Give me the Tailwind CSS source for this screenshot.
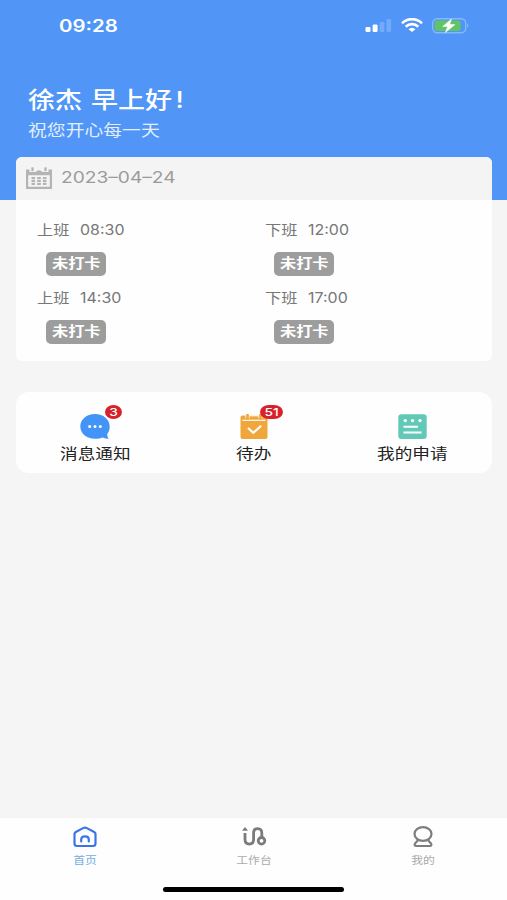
<!DOCTYPE html>
<html lang="zh-CN">
<head>
<meta charset="utf-8">
<title>首页</title>
<script src="https://cdn.jsdelivr.net/npm/@tailwindcss/browser@4"></script>
</head>
<body class="w-[507px] h-[900px] overflow-hidden bg-[#f5f5f5] font-['Inter','Noto_Sans_CJK_SC',sans-serif]">
<div class="flex flex-col h-[900px] whitespace-nowrap">
  <header class="h-[200px] shrink-0 bg-[#5196f7] text-white">
    <div class="flex h-[50px] justify-between pl-[59px] pr-[37px]">
      <div class="mt-[14px] h-6 leading-6 text-[17px] font-semibold origin-left scale-x-[1.2]">09:28</div>
      <div class="flex items-start gap-[9px] pt-[18px]">
        <svg class="mt-px" width="27" height="14" viewBox="0 0 27 14"><rect x=".5" y="8" width="5" height="5" rx="1.3" fill="#fff"/><rect x="7.6" y="5.5" width="5" height="7.500" rx="1.3" fill="#fff"/><rect x="14.700" y="3" width="4.600" height="10" rx="1.3" fill="#73abfa"/><rect x="21.500" y="0" width="4.600" height="13" rx="1.3" fill="#73abfa"/></svg>
        <svg width="22" height="14" viewBox="0 0 22 14" fill="none" stroke="#fff" stroke-width="2.6"><path d="M1 5.3C6.5-.2 15.500-.2 21 5.300"/><path d="M4.700 8.700C8.300 5.300 13.700 5.300 17.300 8.700"/><path d="M7.500 11.200Q11 8.200 14.500 11.200L11 14Z" fill="#fff" stroke="none"/></svg>
        <svg width="38" height="16" viewBox="0 0 38 16"><rect x=".7" y=".7" width="33" height="14" rx="4.500" fill="none" stroke="#85b7fb" stroke-width="1.400"/><path d="M35.200 5.200q2.600 2.300 0 4.600z" fill="#85b7fb"/><rect x="2.700" y="2.500" width="26" height="10.500" rx="2.500" fill="#62c466"/><path d="M19.500 1 10.700 8.500h5L13.300 14.500 23 6.600h-5.300z" fill="#fff" stroke="#fff" stroke-width=".5"/></svg>
      </div>
    </div>
    <div class="pl-7 pt-[34px]">
      <h1 class="flex w-fit h-8 leading-8 text-[22.5px] font-medium origin-left scale-x-[1.2]">徐杰&nbsp;<span class="ml-[1.500px]">早上好</span><span class="ml-[3px]">!</span></h1>
      <p class="w-fit mt-[2.500px] h-6 leading-6 text-[15.700px] text-[#e2eefe] origin-left scale-x-[1.2]">祝您开心每一天</p>
    </div>
  </header>

  <main class="flex-1 pl-4 pr-[15px]">
    <section class="relative -mt-[43px] h-[203.500px] overflow-hidden rounded-[6px] bg-[#fefefe]">
      <div class="flex h-[43px] items-start bg-[#f4f4f4] pl-[10px] pt-[10px]">
        <svg width="26" height="22" viewBox="0 0 26 22"><path fill-rule="evenodd" fill="#b4b4b4" d="M0 2.500h3.500v2.500h6Q13 1.500 16.500 5h6V2.500H26V22H0zM2.200 8.200v11.500h21.600V8.200z"/><path fill="#b4b4b4" stroke="#f4f4f4" stroke-width=".7" d="M5 0h3v4.500H5zM18 0h3v4.500h-3z"/><g fill="#b4b4b4"><rect x="5.500" y="10" width="3.600" height="2.200"/><rect x="11.200" y="10" width="3.600" height="2.200"/><rect x="16.900" y="10" width="3.600" height="2.200"/><rect x="5.500" y="13" width="3.600" height="2.200"/><rect x="11.200" y="13" width="3.600" height="2.200"/><rect x="16.900" y="13" width="3.600" height="2.200"/><rect x="5.500" y="16" width="3.600" height="2"/><rect x="11.200" y="16" width="3.600" height="2"/><rect x="16.900" y="16" width="3.600" height="2"/></g></svg>
        <span class="ml-[9px] h-[22px] leading-[22px] text-[15.500px] text-[#9b9b9b] origin-left scale-x-[1.235]">2023–04–24</span>
      </div>
      <div class="grid grid-cols-[228px_228px] pl-[20.500px] pt-[18.500px] text-[#777]">
        <div class="h-[68px]">
          <div class="flex h-[22px] leading-[22px] text-[13.500px]"><span class="w-[43px]"><span class="inline-block origin-left scale-x-[1.2]">上班</span></span><span class="origin-left scale-x-[1.14] text-[14px]">08:30</span></div>
          <div class="ml-[9.500px] mt-[11px] flex h-6 w-[60px] items-center justify-center rounded-[5px] bg-[#9d9d9d] text-[13.500px] font-bold text-white"><span class="scale-x-[1.2]">未打卡</span></div>
        </div>
        <div class="h-[68px]">
          <div class="flex h-[22px] leading-[22px] text-[13.500px]"><span class="w-[43px]"><span class="inline-block origin-left scale-x-[1.2]">下班</span></span><span class="origin-left scale-x-[1.14] text-[14px]">12:00</span></div>
          <div class="ml-[9.500px] mt-[11px] flex h-6 w-[60px] items-center justify-center rounded-[5px] bg-[#9d9d9d] text-[13.500px] font-bold text-white"><span class="scale-x-[1.2]">未打卡</span></div>
        </div>
        <div class="h-[68px]">
          <div class="flex h-[22px] leading-[22px] text-[13.500px]"><span class="w-[43px]"><span class="inline-block origin-left scale-x-[1.2]">上班</span></span><span class="origin-left scale-x-[1.14] text-[14px]">14:30</span></div>
          <div class="ml-[9.500px] mt-[11px] flex h-6 w-[60px] items-center justify-center rounded-[5px] bg-[#9d9d9d] text-[13.500px] font-bold text-white"><span class="scale-x-[1.2]">未打卡</span></div>
        </div>
        <div class="h-[68px]">
          <div class="flex h-[22px] leading-[22px] text-[13.500px]"><span class="w-[43px]"><span class="inline-block origin-left scale-x-[1.2]">下班</span></span><span class="origin-left scale-x-[1.14] text-[14px]">17:00</span></div>
          <div class="ml-[9.500px] mt-[11px] flex h-6 w-[60px] items-center justify-center rounded-[5px] bg-[#9d9d9d] text-[13.500px] font-bold text-white"><span class="scale-x-[1.2]">未打卡</span></div>
        </div>
      </div>
    </section>

    <section class="mt-[31.500px] grid h-[81px] grid-cols-3 rounded-[13px] bg-[#fefefe] text-[14.700px] text-[#222]">
      <div class="flex flex-col items-center pt-[21px]">
        <div class="relative">
          <svg width="30" height="28" viewBox="0 0 30 28"><path fill="#4294f7" d="M15 1C6.500 1 .3 6.500.3 13.500S6.500 25.800 15 25.800c3.200 0 5.700-.4 7.700-1.300 2 .9 4 1.300 6 1.200-1-1.300-1.500-3-1.500-4.700 1.600-2 2.500-4.500 2.500-7.500C29.700 6.500 23.500 1 15 1z"/><g fill="#fff"><circle cx="9.700" cy="13.500" r="1.500"/><circle cx="15" cy="13.500" r="1.500"/><circle cx="20.300" cy="13.500" r="1.500"/></g></svg>
          <span class="absolute left-[24.500px] -top-[8px] flex h-[14px] w-[17px] items-center justify-center rounded-[50%] bg-[#d8222b] text-[11px] leading-[14px] font-medium text-white"><span class="scale-x-[1.25]">3</span></span>
        </div>
        <span class="mt-[2px] leading-[22px] scale-x-[1.2]">消息通知</span>
      </div>
      <div class="flex flex-col items-center pt-[21px]">
        <div class="relative">
          <svg width="28" height="28" viewBox="0 0 28 28"><path d="M2.500 2.500H5.500V5.500H9.500V2.500H18.500V5.500H22.500V2.500H25.500Q27.500 2.500 27.500 4.500V24Q27.500 26 25.500 26H2.500Q.5 26 .5 24V4.500Q.5 2.500 2.500 2.500Z" fill="#f0a63a"/><path d="M2.500 7.300h23" stroke="#fff" stroke-width="1.200"/><path d="M9.500 2.600h9" stroke="#fef4e2" stroke-width="1.500"/><path d="M7.500 1v5.500M20.500 1v5.500" stroke="#f0a63a" stroke-width="2.600"/><path d="M8 15l5.300 4.800 7.800-7" fill="none" stroke="#fff" stroke-width="2.200"/></svg>
          <span class="absolute left-[20px] -top-[8px] flex h-[14px] w-[23px] items-center justify-center rounded-[9px/7px] bg-[#d8222b] text-[11px] leading-[14px] font-medium text-white"><span class="scale-x-[1.25]">51</span></span>
        </div>
        <span class="mt-[2px] leading-[22px] scale-x-[1.2]">待办</span>
      </div>
      <div class="flex flex-col items-center pt-[21px]">
        <svg width="29" height="28" viewBox="0 0 29 28"><rect x=".3" y="1.300" width="28.400" height="24.700" rx="3" fill="#62c9b8"/><g fill="#fff"><circle cx="7.300" cy="7.600" r="1.700"/><circle cx="14.500" cy="7.600" r="1.700"/><circle cx="22" cy="7.600" r="1.700"/></g><path d="M5.500 13.800h14.500M5.500 19.500h18" stroke="#fff" stroke-width="2"/></svg>
        <span class="mt-[2px] leading-[22px] scale-x-[1.2]">我的申请</span>
      </div>
    </section>
  </main>

  <footer class="flex h-[82px] shrink-0 flex-col items-center bg-[#fefefe] text-[10px] text-[#aaa]">
    <nav class="grid h-[69px] w-full grid-cols-3">
      <div class="flex flex-col items-center pt-2 text-[#72aee0]">
        <svg width="24" height="22" viewBox="0 0 24 22" fill="none" stroke="#3975e8" stroke-width="2.200" stroke-linejoin="round" stroke-linecap="round"><path d="M10.600 1.900 2.800 6Q1.500 6.700 1.500 8V17.500Q1.500 20 4 20H20Q22.500 20 22.500 17.500V8Q22.500 6.700 21.200 6L13.400 1.900Q12 1.200 10.600 1.900Z"/><path d="M8.200 15.500V13.500Q8.200 10.300 12 10.300T15.800 13.500V15.500"/></svg>
        <span class="mt-[3px] leading-[18px] scale-x-[1.18]">首页</span>
      </div>
      <div class="flex flex-col items-center pt-2">
        <svg width="26" height="22" viewBox="0 0 26 22" fill="none" stroke="#7b7b7b" stroke-width="2.800"><path d="M4 7V13.500Q4 18 8.300 18T12.600 13.500V7Q12.600 2.600 16.700 2.600T20.800 7V11.500"/><circle cx="20.500" cy="14.800" r="3.300"/><path d="M1 4.800 4 1 7 4.800Z" fill="#7b7b7b" stroke="none"/></svg>
        <span class="mt-[3px] leading-[18px] scale-x-[1.18]">工作台</span>
      </div>
      <div class="flex flex-col items-center pt-2">
        <svg width="22" height="22" viewBox="0 0 22 22" fill="none" stroke="#7d7d7d" stroke-width="2.200" stroke-linejoin="round"><ellipse cx="11" cy="8" rx="8.500" ry="6.800"/><path d="M6 14.300 3 17.400Q1.800 20 4.300 20H17.700Q20.200 20 19 17.400L16 14.300"/></svg>
        <span class="mt-[3px] leading-[18px] scale-x-[1.18]">我的</span>
      </div>
    </nav>
    <div class="h-[5px] w-[181px] rounded-full bg-black"></div>
  </footer>
</div>
</body>
</html>
